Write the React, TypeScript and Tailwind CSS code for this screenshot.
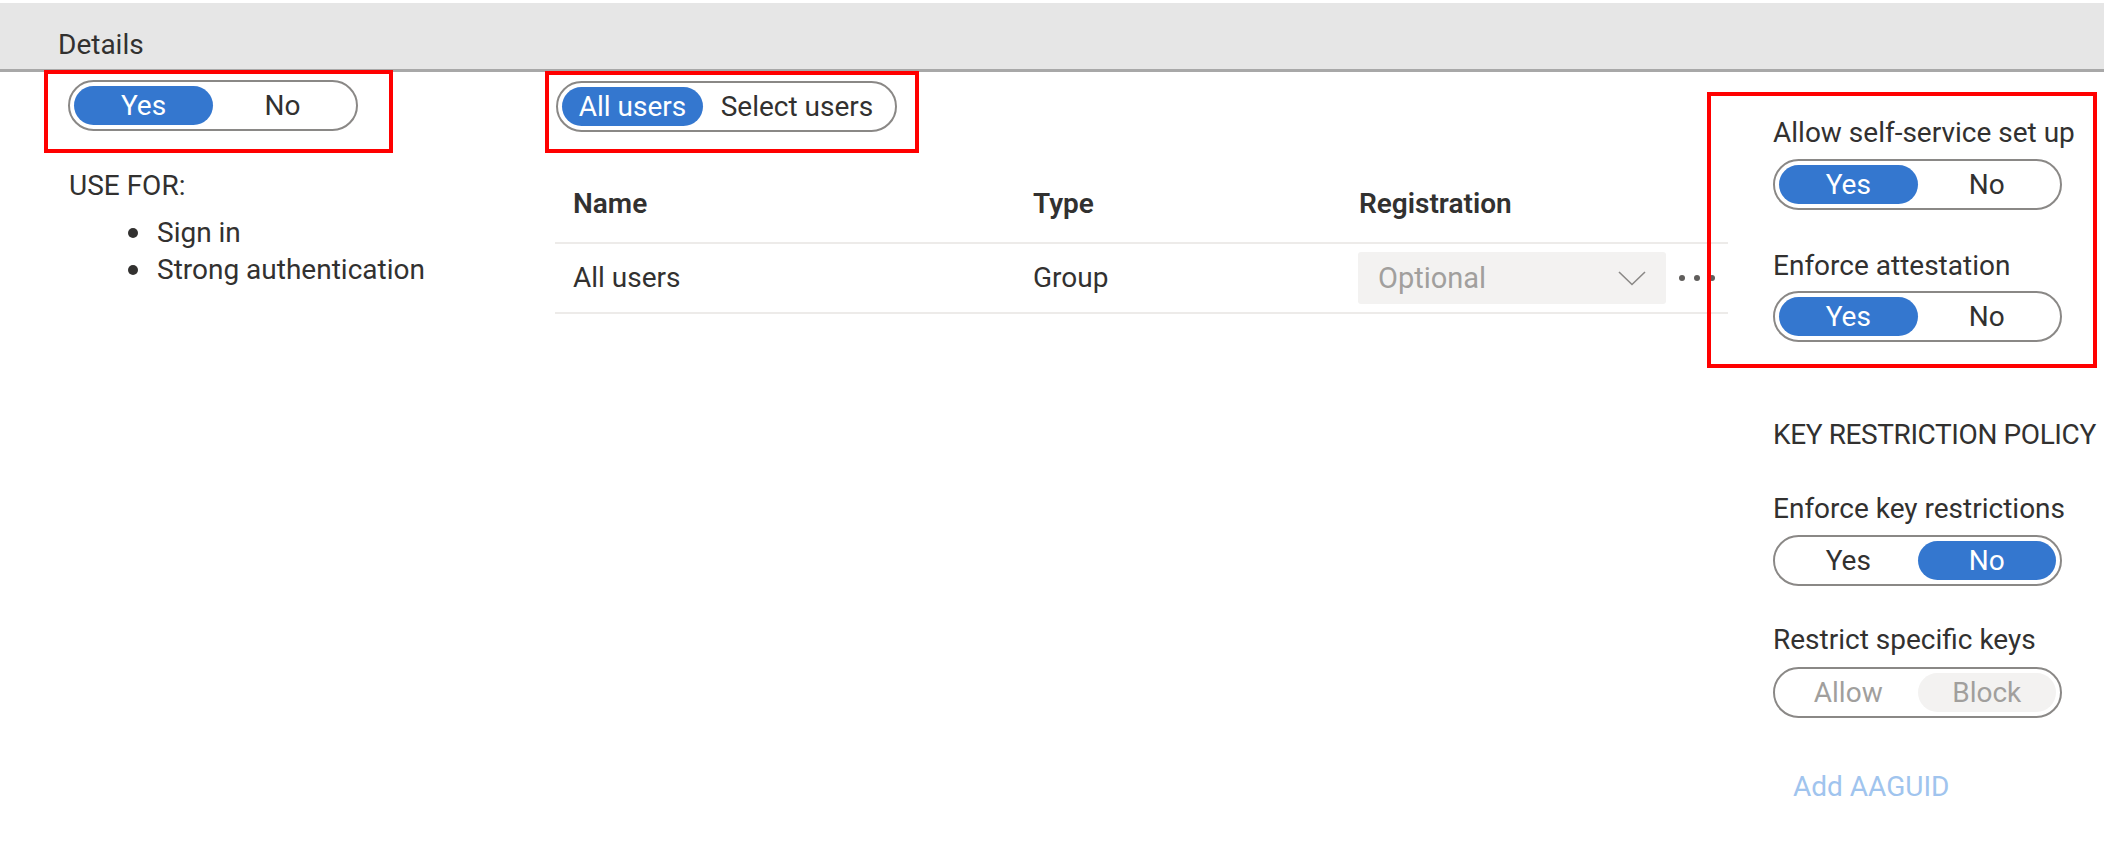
import React from "react";

type Opt = { label: string; cls: string; on?: boolean };

function Toggle({ w, opts, disabled }: { w: string; opts: Opt[]; disabled?: boolean }) {
  return (
    <div className={`${w} flex h-[51px] items-center rounded-full border-2 border-[#8a8886] bg-white px-[4px]`}>
      {opts.map((o) => (
        <div
          key={o.label}
          className={`${o.cls} flex h-[39px] items-center justify-center rounded-full ${
            o.on
              ? disabled
                ? "bg-[#f3f2f1] text-[#a19f9d]"
                : "bg-[#3477cf] text-white"
              : disabled
              ? "text-[#a19f9d]"
              : "text-[#323130]"
          }`}
        >
          {o.label}
        </div>
      ))}
    </div>
  );
}

export default function App() {
  return (
    <div className="min-h-[841px] w-[2104px] overflow-hidden bg-white font-[Roboto,sans-serif] text-[28px] leading-[36px] text-[#323130]">
      {/* header band */}
      <div className="mt-[3px] h-[69px] border-b-[3px] border-[#a8a8a8] bg-[#e6e6e6] pl-[58px] pt-[24px]">
        Details
      </div>

      <div className="flex pl-[44px]">
        {/* left column */}
        <div className="w-[501px] shrink-0">
          <div className="-mt-[2px] h-[83px] w-[349px] border-4 border-[#ff0000] pl-[20px] pt-[6px]">
            <Toggle
              w="w-[290px]"
              opts={[
                { label: "Yes", cls: "flex-1", on: true },
                { label: "No", cls: "flex-1" },
              ]}
            />
          </div>
          <div className="ml-[25px] mt-[15px]">USE FOR:</div>
          <ul className="ml-[84px] mt-[10px] leading-[37px]">
            <li className="flex items-center">
              <span className="mr-[19px] h-[10px] w-[10px] rounded-full bg-[#323130]" />
              Sign in
            </li>
            <li className="flex items-center">
              <span className="mr-[19px] h-[10px] w-[10px] rounded-full bg-[#323130]" />
              Strong authentication
            </li>
          </ul>
        </div>

        {/* middle column */}
        <div className="w-[1183px] shrink-0">
          <div className="-mt-[1px] h-[82px] w-[374px] border-4 border-[#ff0000] pl-[7px] pt-[6px]">
            <Toggle
              w="w-[341px]"
              opts={[
                { label: "All users", cls: "w-[141px]", on: true },
                { label: "Select users", cls: "flex-1" },
              ]}
            />
          </div>

          <div className="ml-[10px] mt-[20px] w-[1173px]">
            <div className="grid h-[71px] grid-cols-[460px_331px_382px] border-b-2 border-[#edebe9] pt-[13px] font-semibold">
              <div className="pl-[18px]">Name</div>
              <div className="pl-[18px]">Type</div>
              <div className="pl-[13px]">Registration</div>
            </div>
            <div className="grid h-[70px] grid-cols-[460px_331px_382px] items-center border-b-2 border-[#edebe9]">
              <div className="pl-[18px]">All users</div>
              <div className="pl-[18px]">Group</div>
              <div className="flex items-center pl-[12px]">
                <div className="flex h-[52px] w-[308px] items-center justify-between rounded-[3px] bg-[#f3f2f1] pl-[20px] pr-[20px] text-[29px] text-[#a19f9d]">
                  <span>Optional</span>
                  <svg width="28" height="15" viewBox="0 0 28 15" fill="none">
                    <polyline points="1,1 14,13.5 27,1" stroke="#8a8886" strokeWidth="1.6" />
                  </svg>
                </div>
                <div className="ml-[13px] flex gap-[9px]">
                  <span className="h-[6px] w-[6px] rounded-full bg-[#605e5c]" />
                  <span className="h-[6px] w-[6px] rounded-full bg-[#605e5c]" />
                  <span className="h-[6px] w-[6px] rounded-full bg-[#605e5c]" />
                </div>
              </div>
            </div>
          </div>
        </div>

        {/* gap */}
        <div className="w-[45px] shrink-0" />

        {/* right column */}
        <div className="relative w-[331px] shrink-0 whitespace-nowrap pt-[43px]">
          <div className="pointer-events-none absolute left-[-66px] top-[20px] z-10 h-[276px] w-[390px] border-4 border-[#ff0000]" />
          <div>Allow self-service set up</div>
          <div className="mt-[8px]">
            <Toggle
              w="w-[289px]"
              opts={[
                { label: "Yes", cls: "flex-1", on: true },
                { label: "No", cls: "flex-1" },
              ]}
            />
          </div>
          <div className="mt-[38px]">Enforce attestation</div>
          <div className="mt-[7px]">
            <Toggle
              w="w-[289px]"
              opts={[
                { label: "Yes", cls: "flex-1", on: true },
                { label: "No", cls: "flex-1" },
              ]}
            />
          </div>
          <div className="mt-[75px] tracking-[-0.4px]">KEY RESTRICTION POLICY</div>
          <div className="mt-[38px]">Enforce key restrictions</div>
          <div className="mt-[8px]">
            <Toggle
              w="w-[289px]"
              opts={[
                { label: "Yes", cls: "flex-1" },
                { label: "No", cls: "flex-1", on: true },
              ]}
            />
          </div>
          <div className="mt-[36px]">Restrict specific keys</div>
          <div className="mt-[9px]">
            <Toggle
              w="w-[289px]"
              disabled
              opts={[
                { label: "Allow", cls: "flex-1" },
                { label: "Block", cls: "flex-1", on: true },
              ]}
            />
          </div>
          <div className="ml-[20px] mt-[51px] text-[#a0c4ee]">Add AAGUID</div>
        </div>
      </div>
    </div>
  );
}
